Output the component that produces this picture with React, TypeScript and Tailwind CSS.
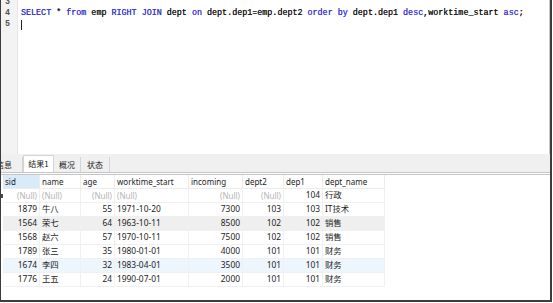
import React from 'react';

const KW = 'text-[#3b3bd4]';

const columns = [
  { key: 'sid', w: 'w-[37px]', right: true },
  { key: 'name', w: 'w-[41px]', right: false },
  { key: 'age', w: 'w-[34px]', right: true },
  { key: 'worktime_start', w: 'w-[74px]', right: false },
  { key: 'incoming', w: 'w-[54px]', right: true },
  { key: 'dept2', w: 'w-[41px]', right: true },
  { key: 'dep1', w: 'w-[39px]', right: true },
  { key: 'dept_name', w: 'w-[62px]', right: false },
];

const rows: (string | null)[][] = [
  [null, null, null, null, null, null, '104', '行政'],
  ['1879', '牛八', '55', '1971-10-20', '7300', '103', '103', 'IT技术'],
  ['1564', '荣七', '64', '1963-10-11', '8500', '102', '102', '销售'],
  ['1568', '赵六', '57', '1970-10-11', '7500', '102', '102', '销售'],
  ['1789', '张三', '35', '1980-01-01', '4000', '101', '101', '财务'],
  ['1674', '李四', '32', '1983-04-01', '3500', '101', '101', '财务'],
  ['1776', '王五', '24', '1990-07-01', '2000', '101', '101', '财务'],
];

function rowBg(i: number) {
  if (i === 2) return 'bg-[#efefef]';
  if (i === 5) return 'bg-[#edf5fd]';
  return 'bg-white';
}

export default function App() {
  return (
    <div className="w-[553px] h-[303px] bg-white overflow-hidden">
      <div className="w-[552px] h-[302px] flex flex-col border-l border-r-2 border-b-2 border-[#3c3c3c] font-['Noto_Sans','Noto_Sans_CJK_SC',sans-serif] text-[8px] text-[#1c1c1c]">
        {/* Editor */}
        <div className="h-[154px] flex border-r border-[#c8c8c8] overflow-hidden">
          <div className="w-[17px] bg-[#f3f3f3] border-r border-[#e6e6e6] font-['Liberation_Mono',monospace] text-[8.4px] font-bold text-[#555] pl-[4px] leading-[11px] -mt-[3px]">
            <div>3</div>
            <div>4</div>
            <div>5</div>
          </div>
          <div className="flex-1 pl-[3px] font-['Liberation_Mono',monospace] text-[8.4px] text-[#1a1a1a] leading-[11px] -mt-[3px] whitespace-pre [text-shadow:0_0_0.4px_currentColor]">
            <div>&nbsp;</div>
            <div>
              <span className={KW}>SELECT</span> * <span className={KW}>from</span> emp{' '}
              <span className={KW}>RIGHT</span> <span className={KW}>JOIN</span> dept{' '}
              <span className={KW}>on</span> dept.dep1=emp.dept2 <span className={KW}>order</span>{' '}
              <span className={KW}>by</span> dept.dep1 <span className={KW}>desc</span>,worktime_start{' '}
              <span className={KW}>asc</span>;
            </div>
            <div className="h-[11px] flex items-center">
              <div className="w-px h-[10px] bg-[#222]" />
            </div>
          </div>
        </div>

        {/* Tabs */}
        <div className="h-[18px] bg-[#f0f0f0] flex items-end font-['Noto_Sans_CJK_SC',sans-serif] text-[8px] text-[#222]">
          <div className="h-[15px] w-[22px] border-r border-[#d4d4d4] flex items-center justify-end pr-[10px] overflow-hidden">
            <span className="whitespace-nowrap">信息</span>
          </div>
          <div className="h-[17px] w-[31px] bg-white border-t border-x border-[#d4d4d4] flex items-center justify-center">
            结果1
          </div>
          <div className="h-[15px] w-[27px] border-r border-[#d4d4d4] flex items-center justify-center">
            概况
          </div>
          <div className="h-[15px] w-[29px] border-r border-[#d4d4d4] flex items-center justify-center">
            状态
          </div>
        </div>
        <div className="h-[3px] border-y border-[#c4c4c4] bg-white" />

        {/* Grid */}
        <div className="flex-1 flex flex-col">
          <div className="flex h-[14px]">
            <div className="w-[2px]" />
            {columns.map((c, i) => (
              <div
                key={c.key}
                className={`${c.w} border-r border-b border-[#ececec] px-[2px] flex items-center whitespace-nowrap overflow-hidden ${i === 0 ? 'bg-[#d9eaf8]' : 'bg-white'}`}
              >
                {c.key}
              </div>
            ))}
          </div>
          {rows.map((r, ri) => (
            <div key={ri} className="flex h-[14px]">
              <div className="w-[2px] flex items-center">
                {ri === 0 && <div className="w-[2px] h-[4px] bg-[#4a4a4a]" />}
              </div>
              {columns.map((c, ci) => (
                <div
                  key={c.key}
                  className={`${c.w} ${rowBg(ri)} border-r border-b border-[#f0f0f0] px-[2px] flex items-center whitespace-nowrap overflow-hidden ${c.right ? 'justify-end' : ''}`}
                >
                  {r[ci] === null ? (
                    <span className="text-[#b4b4b4]">(Null)</span>
                  ) : (
                    <span className="text-[8.4px]">{r[ci]}</span>
                  )}
                </div>
              ))}
            </div>
          ))}
        </div>
      </div>
    </div>
  );
}
